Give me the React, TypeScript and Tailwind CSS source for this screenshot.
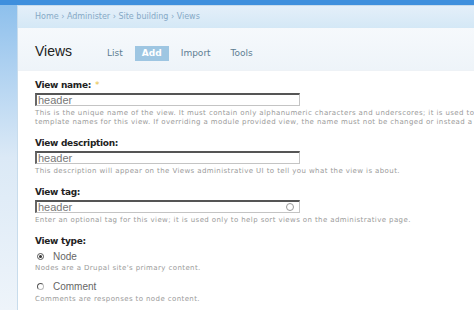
import React from 'react';

const font = { fontFamily: '"DejaVu Sans", Verdana, sans-serif' };
const sans = { fontFamily: '"Liberation Sans", Arial, sans-serif' };

function Field({ label, required, desc, circle }: { label: string; required?: boolean; desc: string[]; circle?: boolean }) {
    return (
        <div className="mb-[10px]">
            <div className="text-[9px] font-bold leading-[12px] tracking-[-0.3px] text-[#222] mb-[2px]">
                {label}
                {required && <span className="ml-[4px] font-normal text-[#e8c040]">*</span>}
            </div>
            <div className="relative w-[265px] h-[13px] border border-[#c4c4c4] border-t-2 border-t-[#555] border-l-2 border-l-[#666] bg-white">
                <span style={sans} className="absolute left-[1px] top-[-2px] text-[11px] leading-[14px] text-[#777]">header</span>
                {circle && <span className="absolute right-[5px] top-[1px] w-[8px] h-[8px] rounded-full border border-[#999]" />}
            </div>
            <div className="mt-[3px]">
                {desc.map((d, i) => (
                    <div key={i} className="text-[7px] leading-[9px] text-[#9a9a9a] whitespace-nowrap tracking-[0.4px]">{d}</div>
                ))}
            </div>
        </div>
    );
}

export default function App() {
    return (
        <div style={font} className="w-[474px] h-[310px] overflow-hidden flex flex-col bg-gradient-to-b from-[#5aa4e8] to-[#e6eff8]">
            <div className="h-[5px] shrink-0 bg-[#3f8fdd]" />
            <div className="flex flex-1 min-h-0">
                <div className="w-[17px] shrink-0 bg-gradient-to-b from-[#8ec0ec] via-[#dbe9f6] to-[#eef4fa]" />
                <div className="flex-1 min-w-0 overflow-hidden flex flex-col border-l border-t border-[#c8dcec] bg-white">
                    <div className="h-[22px] shrink-0 flex items-center pl-[17px] text-[8px] text-[#86a9c6] bg-gradient-to-b from-[#e4eff9] to-[#d4e8f6]">
                        Home › Administer › Site building › Views
                    </div>
                    <div className="h-[43px] shrink-0 flex items-center pl-[17px] pt-[6px] bg-gradient-to-b from-[#f6f9fc] to-[#eef4f9] border-b border-[#eef2f6]">
                        <span style={sans} className="w-[72px] text-[14px] text-[#222] mt-[-1px]">Views</span>
                        <div className="flex items-center text-[9px] text-[#5d7d92] mt-[3px]">
                            <span className="mr-[12px]">List</span>
                            <span className="w-[34px] h-[15px] bg-[#9ec6e2] text-white font-bold flex items-center justify-center mr-[12px]">Add</span>
                            <span className="mr-[20px]">Import</span>
                            <span>Tools</span>
                        </div>
                    </div>
                    <div className="pl-[17px] pt-[8px] shrink-0">
                        <Field
                            label="View name:"
                            required
                            desc={[
                                'This is the unique name of the view. It must contain only alphanumeric characters and underscores; it is used to identify the view internally and to generate unique theming',
                                'template names for this view. If overriding a module provided view, the name must not be changed or instead a new view will be created.',
                            ]}
                        />
                        <Field label="View description:" desc={['This description will appear on the Views administrative UI to tell you what the view is about.']} />
                        <Field circle label="View tag:" desc={['Enter an optional tag for this view; it is used only to help sort views on the administrative page.']} />
                        <div className="text-[9px] font-bold leading-[12px] tracking-[-0.3px] text-[#222]">View type:</div>
                        <div style={sans} className="flex items-center h-[12px] mt-[3px] ml-[2px]">
                            <span className="w-[7px] h-[7px] rounded-full border border-[#555] flex items-center justify-center mr-[9px]">
                                <span className="w-[3px] h-[3px] rounded-full bg-[#333]" />
                            </span>
                            <span className="text-[10px] text-[#666]">Node</span>
                        </div>
                        <div className="text-[7px] leading-[9px] tracking-[0.4px] text-[#9a9a9a] mt-[2px]">Nodes are a Drupal site's primary content.</div>
                        <div style={sans} className="flex items-center h-[12px] mt-[7px] ml-[2px]">
                            <span className="w-[7px] h-[7px] rounded-full border border-[#555] border-r-[#bbb] border-b-[#bbb] mr-[9px]" />
                            <span className="text-[10px] text-[#666]">Comment</span>
                        </div>
                        <div className="text-[7px] leading-[9px] tracking-[0.4px] text-[#9a9a9a] mt-[3px]">Comments are responses to node content.</div>
                    </div>
                </div>
            </div>
        </div>
    );
}
